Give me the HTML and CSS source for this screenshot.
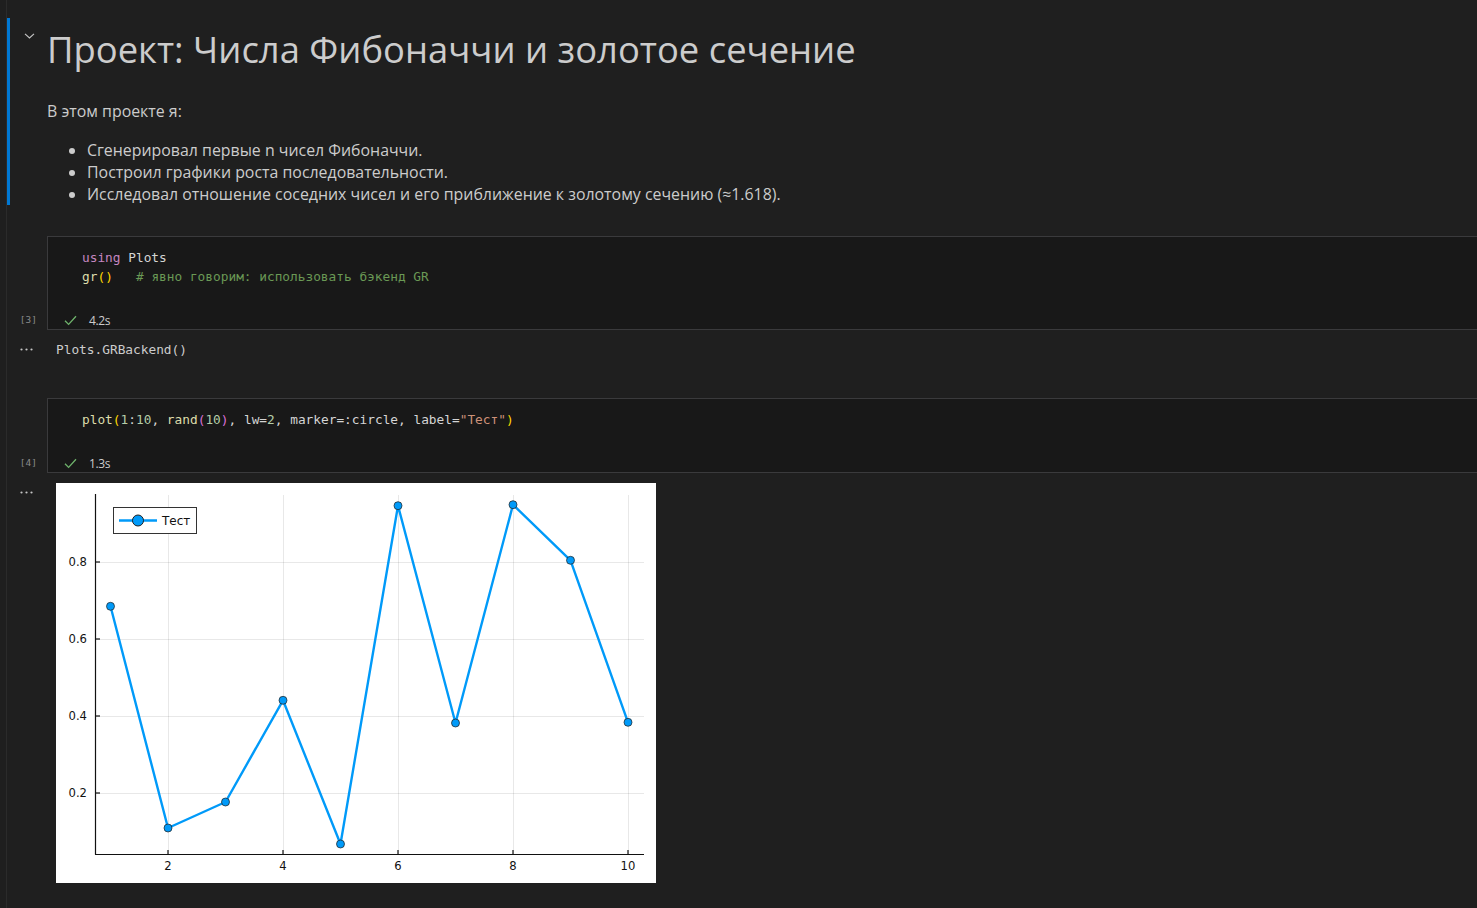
FILE: index.html
```html
<!DOCTYPE html>
<html lang="ru">
<head>
<meta charset="utf-8">
<title>Notebook</title>
<link rel="stylesheet" href="styles.css">
</head>
<body>
<div class="notebook">

  <section class="cell md-cell">
    <div class="gutter md-gutter">
      <span class="focus-bar"></span>
      <svg class="chevron" width="11" height="6" viewBox="0 0 11 6"><path d="M1 0.8 L5.5 5 L10 0.8" fill="none" stroke="#c5c5c5" stroke-width="1.1"/></svg>
    </div>
    <div class="md-body">
      <h1>Проект: Числа Фибоначчи и золотое сечение</h1>
      <p>В этом проекте я:</p>
      <ul>
        <li>Сгенерировал первые n чисел Фибоначчи.</li>
        <li>Построил графики роста последовательности.</li>
        <li>Исследовал отношение соседних чисел и его приближение к золотому сечению (≈1.618).</li>
      </ul>
    </div>
  </section>

  <section class="cell code-cell first-code">
    <div class="gutter code-gutter"><span class="exec-count">[3]</span></div>
    <div class="cell-box">
<pre class="code"><span class="kw">using</span> Plots
<span class="fn">gr</span><span class="b1">()</span>   <span class="cm"># явно говорим: использовать бэкенд GR</span></pre>
      <div class="status">
        <svg class="check" width="13" height="11" viewBox="0 0 13 11"><path d="M1 5.8 L4.6 9.4 L12 1.2" fill="none" stroke="#6fb36c" stroke-width="1.3"/></svg>
        <span class="time">4.2s</span>
      </div>
    </div>
  </section>

  <section class="output output-text">
    <div class="out-gutter">
      <svg class="dots" width="14" height="19" viewBox="0 0 14 19"><circle cx="1.5" cy="9.5" r="1.1" fill="#c5c5c5"/><circle cx="6.5" cy="9.5" r="1.1" fill="#c5c5c5"/><circle cx="11.5" cy="9.5" r="1.1" fill="#c5c5c5"/></svg>
    </div>
    <div class="out-body"><pre class="out-pre">Plots.GRBackend()</pre></div>
  </section>

  <section class="cell code-cell">
    <div class="gutter code-gutter"><span class="exec-count">[4]</span></div>
    <div class="cell-box">
<pre class="code"><span class="fn">plot</span><span class="b1">(</span><span class="nu">1</span>:<span class="nu">10</span>, <span class="fn">rand</span><span class="b2">(</span><span class="nu">10</span><span class="b2">)</span>, lw=<span class="nu">2</span>, marker=:circle, label=<span class="st">"Тест"</span><span class="b1">)</span></pre>
      <div class="status">
        <svg class="check" width="13" height="11" viewBox="0 0 13 11"><path d="M1 5.8 L4.6 9.4 L12 1.2" fill="none" stroke="#6fb36c" stroke-width="1.3"/></svg>
        <span class="time">1.3s</span>
      </div>
    </div>
  </section>

  <section class="output output-plot">
    <div class="out-gutter">
      <svg class="dots" width="14" height="19" viewBox="0 0 14 19"><circle cx="1.5" cy="9.5" r="1.1" fill="#c5c5c5"/><circle cx="6.5" cy="9.5" r="1.1" fill="#c5c5c5"/><circle cx="11.5" cy="9.5" r="1.1" fill="#c5c5c5"/></svg>
    </div>
    <div class="out-body">
      <svg class="plot" width="600" height="400" viewBox="0 0 600 400">
        <rect width="600" height="400" fill="#ffffff"/>
        <g stroke="#000" stroke-opacity="0.09" stroke-width="1" shape-rendering="crispEdges">
          <line x1="112" y1="12" x2="112" y2="371"/>
          <line x1="227" y1="12" x2="227" y2="371"/>
          <line x1="342" y1="12" x2="342" y2="371"/>
          <line x1="457" y1="12" x2="457" y2="371"/>
          <line x1="572" y1="12" x2="572" y2="371"/>
          <line x1="39" y1="79" x2="588" y2="79"/>
          <line x1="39" y1="156" x2="588" y2="156"/>
          <line x1="39" y1="233" x2="588" y2="233"/>
          <line x1="39" y1="310" x2="588" y2="310"/>
        </g>
        <g stroke="#111" stroke-width="1.2">
          <line x1="39.5" y1="11" x2="39.5" y2="371.5"/>
          <line x1="39" y1="371.5" x2="588" y2="371.5"/>
          <line x1="39.5" y1="79" x2="44" y2="79"/>
          <line x1="39.5" y1="156" x2="44" y2="156"/>
          <line x1="39.5" y1="233" x2="44" y2="233"/>
          <line x1="39.5" y1="310" x2="44" y2="310"/>
          <line x1="112" y1="371.5" x2="112" y2="367"/>
          <line x1="227" y1="371.5" x2="227" y2="367"/>
          <line x1="342" y1="371.5" x2="342" y2="367"/>
          <line x1="457" y1="371.5" x2="457" y2="367"/>
          <line x1="572" y1="371.5" x2="572" y2="367"/>
        </g>
        <g class="tick-label" text-anchor="end">
          <text x="31" y="83">0.8</text>
          <text x="31" y="160">0.6</text>
          <text x="31" y="237">0.4</text>
          <text x="31" y="314">0.2</text>
        </g>
        <g class="tick-label" text-anchor="middle">
          <text x="112" y="387">2</text>
          <text x="227" y="387">4</text>
          <text x="342" y="387">6</text>
          <text x="457" y="387">8</text>
          <text x="572" y="387">10</text>
        </g>
        <polyline fill="none" stroke="#009af9" stroke-width="2.4" stroke-linejoin="round"
          points="54.5,123.3 112,345 169.5,319 227,217.3 284.5,361 342,22.7 399.5,240 457,21.7 514.5,77.3 572,239.3"/>
        <g fill="#009af9" stroke="#222" stroke-opacity="0.8" stroke-width="0.9">
          <circle cx="54.5" cy="123.3" r="4"/>
          <circle cx="112" cy="345" r="4"/>
          <circle cx="169.5" cy="319" r="4"/>
          <circle cx="227" cy="217.3" r="4"/>
          <circle cx="284.5" cy="361" r="4"/>
          <circle cx="342" cy="22.7" r="4"/>
          <circle cx="399.5" cy="240" r="4"/>
          <circle cx="457" cy="21.7" r="4"/>
          <circle cx="514.5" cy="77.3" r="4"/>
          <circle cx="572" cy="239.3" r="4"/>
        </g>
        <rect x="57.5" y="24.5" width="83" height="26" fill="#fff" stroke="#333" stroke-width="1"/>
        <line x1="63" y1="37.5" x2="101" y2="37.5" stroke="#009af9" stroke-width="2.4"/>
        <circle cx="82" cy="37.5" r="5.5" fill="#009af9" stroke="#222" stroke-width="1"/>
        <text class="legend-label" x="106" y="41.5">Тест</text>
      </svg>
    </div>
  </section>

</div>
</body>
</html>
```

FILE: styles.css
```css
html, body {
  margin: 0;
  padding: 0;
}

body {
  background: #1f1f1f;
  color: #cccccc;
  font-family: "Open Sans", "Noto Sans", sans-serif;
  overflow: hidden;
  height: 908px;
}

.notebook {
  margin-left: 6px;
  border-left: 1px solid #2b2b2b;
  min-height: 908px;
  box-sizing: border-box;
  padding-top: 18px;
}

.cell {
  display: flex;
}

.gutter {
  width: 40px;
  flex: none;
  box-sizing: border-box;
}

/* markdown cell */
.md-gutter {
  display: flex;
  align-items: flex-start;
}

.focus-bar {
  width: 3px;
  align-self: stretch;
  background: #0078d4;
}

.chevron {
  margin-left: 14px;
  margin-top: 15px;
  display: block;
}

.md-body {
  flex: 1;
  padding-top: 9px;
}

.md-body h1 {
  margin: 0 0 29px;
  font-size: 36.4px;
  line-height: 44px;
  font-weight: 400;
  color: #cccccc;
}

.md-body p {
  margin: 0;
  font-size: 15.9px;
  line-height: 22px;
}

.md-body ul {
  margin: 17px 0 0;
  padding-left: 40px;
  font-size: 15.9px;
  line-height: 22px;
}

/* code cells */
.code-cell.first-code {
  margin-top: 31px;
}

.code-gutter {
  display: flex;
  flex-direction: column;
  justify-content: flex-end;
  align-items: flex-end;
  padding-right: 10px;
}

.exec-count {
  font-family: "DejaVu Sans Mono", monospace;
  font-size: 9.5px;
  line-height: 18px;
  margin-bottom: 1px;
  color: #8a8a8a;
}

.cell-box {
  flex: 1;
  margin-right: -10px;
  background: #181818;
  border: 1px solid #3a3a3c;
}

.code {
  margin: 0;
  padding: 11px 0 0 34px;
  font-family: "DejaVu Sans Mono", monospace;
  font-size: 12.8px;
  line-height: 19px;
  color: #d4d4d4;
}

.kw { color: #c586c0; }
.fn { color: #dcdcaa; }
.b1 { color: #ffd700; }
.b2 { color: #da70d6; }
.nu { color: #b5cea8; }
.st { color: #ce9178; }
.cm { color: #6a9955; }

.status {
  display: flex;
  align-items: center;
  height: 18px;
  margin-top: 25px;
  padding-left: 16px;
  gap: 12px;
}

.check {
  display: block;
}

.time {
  font-size: 12px;
  letter-spacing: -0.4px;
  color: #cccccc;
}

/* outputs */
.output {
  display: flex;
  padding-top: 10px;
}

.output-text {
  padding-bottom: 39px;
}

.out-gutter {
  width: 49px;
  flex: none;
}

.dots {
  display: block;
  margin-left: 13px;
}

.out-pre {
  margin: 0;
  font-family: "DejaVu Sans Mono", monospace;
  font-size: 12.8px;
  line-height: 19px;
  color: #cccccc;
}

.plot {
  display: block;
}

.tick-label text {
  font-family: "DejaVu Sans", sans-serif;
  font-size: 11.6px;
  fill: #111111;
}

.legend-label {
  font-family: "DejaVu Sans", sans-serif;
  font-size: 12px;
  fill: #111111;
}
```
